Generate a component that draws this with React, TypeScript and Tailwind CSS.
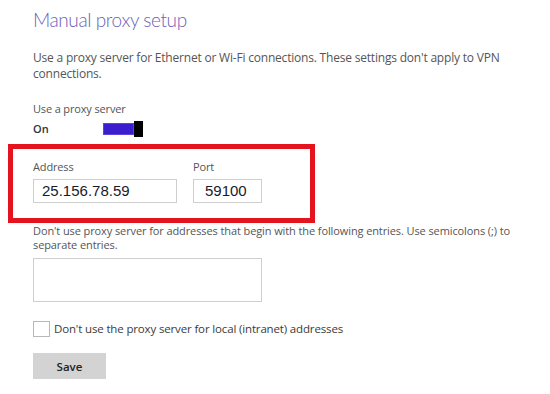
import React from "react";

const font = { fontFamily: '"Open Sans", "Noto Sans", sans-serif' };
const mono = { fontFamily: '"Liberation Sans", Arial, sans-serif' };

const Toggle: React.FC = () => {
    return (<div className="flex items-center h-[16px]">
        <div className="w-[31px] h-[12px] bg-[#3b1ccf] border border-[#5a45d8]"/>
        <div className="w-[9px] h-[16px] bg-black"/>
    </div>);
}

export default function App() {
    return (<div className="relative w-[550px] h-[394px] bg-white text-[#555]" style={font}>
        <div className="pl-[33px] pt-[5px]">
            <h1 className="text-[19px] font-light text-[#6b5fb8] leading-[30px] tracking-[-0.4px]"
                style={{fontFamily: 'Lato, "Open Sans", sans-serif'}}>Manual proxy setup</h1>
            <p className="mt-[15px] text-[12px] leading-[16px] tracking-[-0.2px]">
                Use a proxy server for Ethernet or Wi-Fi connections. These settings don't apply to VPN<br/>connections.
            </p>
            <div className="mt-[20px] text-[11px] leading-[14px] tracking-[-0.15px]">Use a proxy server</div>
            <div className="mt-[5px] flex items-center h-[16px]">
                <span className="w-[70px] text-[11px] font-semibold text-[#333]">On</span>
                <Toggle/>
            </div>

            <div className="mt-[23px] flex gap-[16px]">
                <div className="flex flex-col">
                    <span className="text-[11px] leading-[14px] tracking-[-0.15px]">Address</span>
                    <div className="mt-[5px] w-[144px] h-[24px] border border-[#cfcfcf] pl-[8px] flex items-center text-[15px] text-[#1a1a2a]"
                         style={mono}>25.156.78.59</div>
                </div>
                <div className="flex flex-col">
                    <span className="text-[11px] leading-[14px] tracking-[-0.15px]">Port</span>
                    <div className="mt-[5px] w-[69px] h-[24px] border border-[#cfcfcf] pl-[11px] flex items-center text-[15px] text-[#1a1a2a]"
                         style={mono}>59100</div>
                </div>
            </div>

            <p className="mt-[21px] text-[11px] leading-[14px] tracking-[-0.1px]">
                Don't use proxy server for addresses that begin with the following entries. Use semicolons (;) to<br/>separate entries.
            </p>
            <div className="mt-[6px] w-[229px] h-[44px] border border-[#cfcfcf]"/>

            <label className="mt-[18px] flex items-center gap-[4px]">
                <span className="w-[17px] h-[16px] border border-[#b8b8b8] bg-white"/>
                <span className="text-[11.5px] text-[#3a3a3a] tracking-[-0.15px]">Don't use the proxy server for local (intranet) addresses</span>
            </label>

            <button className="mt-[16px] w-[73px] h-[26px] bg-[#d3d3d3] text-[11.5px] font-semibold text-[#222]">Save</button>
        </div>

        <div className="absolute left-[8px] top-[144px] w-[307px] h-[79px] border-[5px] border-[#e5131d]"/>
    </div>);
}
